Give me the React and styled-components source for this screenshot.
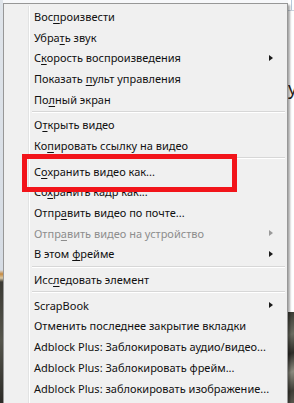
import styled, { createGlobalStyle } from "styled-components";

const GlobalStyle = createGlobalStyle`
  html, body {
    margin: 0;
    padding: 0;
    background: #ffffff;
  }
`;

const Page = styled.div`
  position: relative;
  display: flex;
  flex-direction: row;
  width: 294px;
  height: 403px;
  overflow: hidden;
  background: #f7f8fa;
  font-family: "Noto Sans", "Open Sans", sans-serif;
`;

const LeftStrip = styled.div`
  width: 3px;
  flex-shrink: 0;
  background: linear-gradient(
    to bottom,
    #dfe4ea 0px,
    #d6dce4 270px,
    #c68a3e 274px,
    #d9c8a6 278px,
    #3b3a34 282px,
    #55554c 340px,
    #2c2b27 403px
  );
`;

const RightStrip = styled.div`
  flex: 1;
  display: flex;
  flex-direction: column;
  background: #ffffff;
`;

const RightTop = styled.div`
  height: 10px;
  border-bottom: 1px solid #c9d3de;
  background: linear-gradient(to right, #ffffff 0 3px, #b8c9dc 3px 4px, #ffffff 4px);
`;

const RightText = styled.div`
  padding-top: 68px;
  height: 233px;
  font-size: 18px;
  line-height: 18px;
  color: #222;
  overflow: hidden;
  white-space: nowrap;
`;

const RightPhoto = styled.div`
  flex: 1;
  background: linear-gradient(
    160deg,
    #3a3a33 0%,
    #6a6b60 25%,
    #2d2c28 45%,
    #8b8a7e 65%,
    #3e3d36 85%,
    #5b5a50 100%
  );
`;

const MenuWrap = styled.div`
  padding-top: 3px;
  width: 285px;
  flex-shrink: 0;
`;

const Menu = styled.div`
  position: relative;
  height: 420px;
  border: 1px solid #979797;
  border-bottom: none;
  background: #f0f0f0;
  box-shadow: 2px 2px 2px rgba(0, 0, 0, 0.35);
  padding: 2px 2px 0 2px;
  box-sizing: border-box;

  &::before {
    content: "";
    position: absolute;
    top: 2px;
    bottom: 0;
    left: 24px;
    width: 1px;
    background: #e2e3e3;
    border-right: 1px solid #ffffff;
  }
`;

const Item = styled.div`
  position: relative;
  display: flex;
  align-items: center;
  height: 20.7px;
  padding-left: 28px;
  padding-right: 12px;
  font-size: 11px;
  color: ${(p) => (p.$disabled ? "#8d8d8d" : "#111")};
  white-space: nowrap;
`;

const Label = styled.span`
  flex: 1;
`;

const Key = styled.span`
  text-decoration: underline;
  text-underline-offset: 2px;
`;

const Arrow = styled.span`
  width: 0;
  height: 0;
  border-top: 3.5px solid transparent;
  border-bottom: 3.5px solid transparent;
  border-left: 4px solid ${(p) => (p.$disabled ? "#9a9a9a" : "#1a1a1a")};
`;

const Separator = styled.div`
  margin: 1.5px 0 1.5px 26px;
  height: 1px;
  background: #d7d7d7;
  border-bottom: 1px solid #ffffff;
`;

const Highlight = styled.div`
  position: absolute;
  left: 18px;
  top: 150px;
  width: 215px;
  height: 38px;
  border: 5px solid #f2141a;
  box-sizing: border-box;
`;

const items = [
  { pre: "Вос", key: "п", post: "роизвести" },
  { pre: "Убра", key: "т", post: "ь звук" },
  { pre: "С", key: "к", post: "орость воспроизведения", sub: true },
  { pre: "Показать ", key: "п", post: "ульт управления" },
  { pre: "По", key: "л", post: "ный экран" },
  "sep",
  { pre: "О", key: "т", post: "крыть видео" },
  { pre: "Ко", key: "п", post: "ировать ссылку на видео" },
  "sep",
  { pre: "С", key: "о", post: "хранить видео как..." },
  { pre: "Со", key: "х", post: "ранить кадр как..." },
  { pre: "Отпр", key: "а", post: "вить видео по почте..." },
  { pre: "Отпр", key: "а", post: "вить видео на устройство", sub: true, disabled: true },
  { pre: "В этом ", key: "ф", post: "рейме", sub: true },
  "sep",
  { pre: "Исс", key: "л", post: "едовать элемент" },
  "sep",
  { pre: "ScrapBook", sub: true },
  { pre: "Отменить последнее закрытие вкладки" },
  { pre: "Adblock Plus: Заблокировать аудио/видео..." },
  { pre: "Adblock Plus: Заблокировать фрейм..." },
  { pre: "Adblock Plus: заблокировать изображение..." },
];

const App = () => {
  return (
    <>
      <GlobalStyle />
      <Page>
        <LeftStrip />
        <MenuWrap>
          <Menu>
            {items.map((it, i) =>
              it === "sep" ? (
                <Separator key={i} />
              ) : (
                <Item key={i} $disabled={it.disabled}>
                  <Label>
                    {it.pre}
                    {it.key && <Key>{it.key}</Key>}
                    {it.post}
                  </Label>
                  {it.sub && <Arrow $disabled={it.disabled} />}
                </Item>
              )
            )}
            <Highlight />
          </Menu>
        </MenuWrap>
        <RightStrip>
          <RightTop />
          <RightText>у</RightText>
          <RightPhoto />
        </RightStrip>
      </Page>
    </>
  );
};

export default App;
